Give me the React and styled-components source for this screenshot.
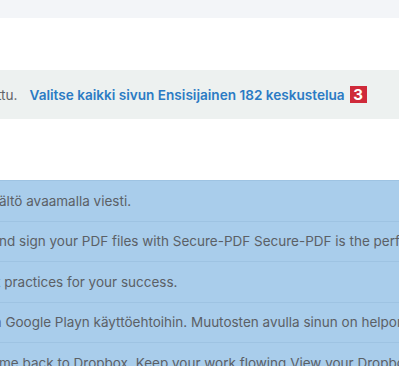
import styled, { createGlobalStyle } from "styled-components";

const GlobalStyle = createGlobalStyle`
  html, body {
    margin: 0;
    padding: 0;
    background: #ffffff;
    font-family: Inter, "Liberation Sans", sans-serif;
    overflow: hidden;
  }
`;

const rows = [
  "ältö avaamalla viesti.",
  "nd sign your PDF files with Secure-PDF Secure-PDF is the perfect tool",
  "t practices for your success.",
  "a Google Playn käyttöehtoihin. Muutosten avulla sinun on helpompi",
  "me back to Dropbox. Keep your work flowing View your Dropbox",
];

const offsets = [-1, -1, -4, -6, -1];

const App = () => {
  return (
    <>
      <GlobalStyle />
      <Page>
        <TopBar />
        <Gap $h={52} />
        <Banner>
          <Muted>ttu.</Muted>
          <SelectAll>Valitse kaikki sivun Ensisijainen 182 keskustelua</SelectAll>
          <Badge>3</Badge>
        </Banner>
        <Gap $h={61} />
        <List>
          {rows.map((text, i) => (
            <Row key={i}>
              <Snippet style={{ marginLeft: offsets[i] }}>{text}</Snippet>
            </Row>
          ))}
        </List>
      </Page>
    </>
  );
};

const Page = styled.div`
  width: 399px;
  height: 366px;
  overflow: hidden;
`;

const TopBar = styled.div`
  height: 18px;
  background: #f3f5f8;
`;

const Gap = styled.div`
  height: ${({ $h }) => $h}px;
`;

const Banner = styled.div`
  height: 49px;
  background: #edf1f0;
  display: flex;
  align-items: center;
  font-size: 13.6px;
  white-space: nowrap;
`;

const Muted = styled.span`
  color: #5f6368;
  margin-left: -3px;
`;

const SelectAll = styled.span`
  color: #2b7bc4;
  font-weight: 600;
  margin-left: 12px;
`;

const Badge = styled.span`
  display: inline-flex;
  align-items: center;
  justify-content: center;
  width: 17px;
  height: 17px;
  margin-left: 5px;
  background: #cf2a3a;
  color: #ffffff;
  font-weight: 700;
  font-size: 15px;
`;

const List = styled.div`
  background: #a9cdeb;
  border-top: 1px solid #9ec3e2;
`;

const Row = styled.div`
  height: 40.5px;
  box-sizing: border-box;
  border-bottom: 1px solid #9ec3e2;
  display: flex;
  align-items: center;
  overflow: hidden;
  white-space: nowrap;
`;

const Snippet = styled.span`
  color: #5b6066;
  font-size: 13.5px;
`;

export default App;
